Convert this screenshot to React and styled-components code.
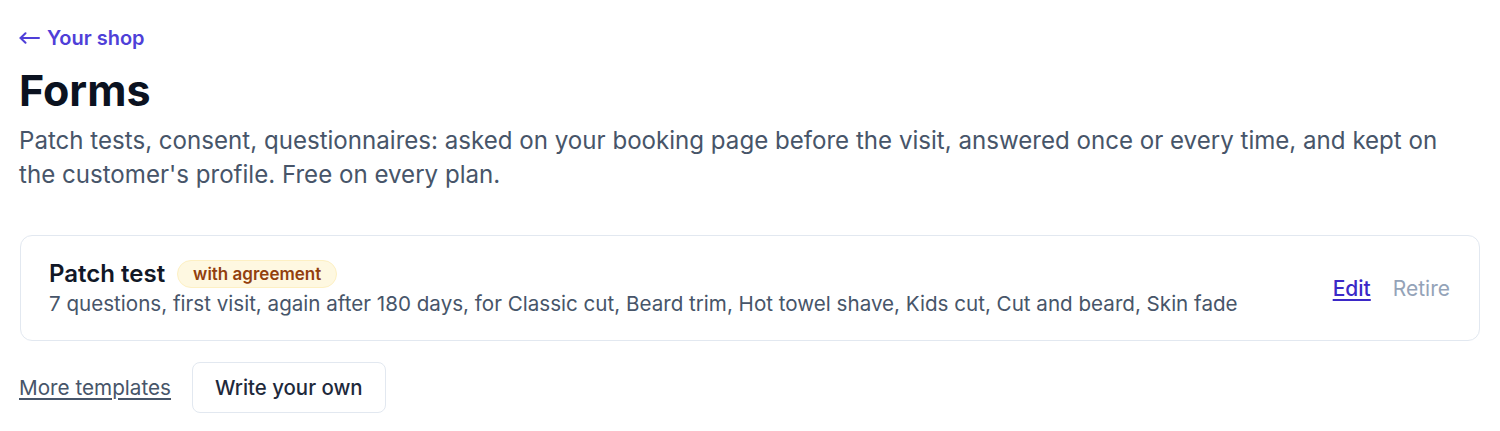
import React from "react";
import styled, { createGlobalStyle } from "styled-components";

const GlobalStyle = createGlobalStyle`
  body {
    margin: 0;
    background: #ffffff;
    font-family: Inter, "Noto Sans", sans-serif;
    color: #0f172a;
  }
`;

const Page = styled.main`
  padding: 24px 20px 18px 19px;
`;

const BackLink = styled.a`
  display: inline-flex;
  align-items: center;
  gap: 7px;
  font-size: 20px;
  font-weight: 600;
  line-height: 28px;
  color: #4f3fd8;
  text-decoration: none;
`;

const Arrow = styled.svg`
  width: 21px;
  height: 12px;
  flex: none;
`;

const Title = styled.h1`
  margin: 12px 0 0;
  font-size: 43px;
  font-weight: 700;
  line-height: 52px;
  color: #0b1220;
`;

const Intro = styled.p`
  margin: 8px 0 0;
  max-width: 1445px;
  font-size: 24.1px;
  line-height: 34px;
  color: #475569;
`;

const FormList = styled.div`
  margin-top: 43px;
  display: flex;
  flex-direction: column;
  gap: 12px;
`;

const Card = styled.div`
  display: flex;
  align-items: center;
  justify-content: space-between;
  margin-left: 1px;
  width: 1460px;
  box-sizing: border-box;
  padding: 23px 29px 22px 28px;
  border: 1px solid #e2e8f0;
  border-radius: 12px;
  background: #fff;
`;

const CardBody = styled.div`
  display: flex;
  flex-direction: column;
  gap: 1px;
`;

const CardHead = styled.div`
  display: flex;
  align-items: center;
  gap: 12px;
`;

const CardTitle = styled.span`
  font-size: 24px;
  font-weight: 600;
  line-height: 30px;
  color: #111827;
`;

const Badge = styled.span`
  display: inline-flex;
  align-items: center;
  padding: 1px 15px;
  font-size: 17px;
  font-weight: 600;
  line-height: 24px;
  color: #92400e;
  background: #fef8e1;
  border: 1px solid #fdf0c3;
  border-radius: 999px;
`;

const CardMeta = styled.span`
  font-size: 20.6px;
  line-height: 28px;
  color: #475569;
`;

const Actions = styled.div`
  display: flex;
  align-items: center;
  gap: 22px;
`;

const ActionLink = styled.a`
  font-size: 21px;
  line-height: 28px;
  font-weight: ${(p) => (p.$primary ? 500 : 400)};
  color: ${(p) => (p.$primary ? "#3b28c7" : "#94a3b8")};
  text-decoration: ${(p) => (p.$primary ? "underline" : "none")};
  text-underline-offset: 3px;
  cursor: pointer;
`;

const Footer = styled.div`
  display: flex;
  align-items: center;
  gap: 21px;
  margin-top: 21px;
`;

const TextLink = styled.a`
  font-size: 20.7px;
  line-height: 28px;
  color: #475569;
  text-decoration: underline;
  text-underline-offset: 3px;
  cursor: pointer;
`;

const Button = styled.button`
  font-family: inherit;
  font-size: 20.4px;
  font-weight: 500;
  line-height: 29px;
  color: #1e293b;
  background: #fff;
  border: 1px solid #e2e8f0;
  border-radius: 8px;
  padding: 10px 22px;
  cursor: pointer;
`;

const forms = [
  {
    name: "Patch test",
    badge: "with agreement",
    meta: "7 questions, first visit, again after 180 days, for Classic cut, Beard trim, Hot towel shave, Kids cut, Cut and beard, Skin fade",
  },
];

export default function App() {
  return (
    <>
      <GlobalStyle />
      <Page>
        <BackLink href="#">
          <Arrow viewBox="0 0 21 12" fill="none" stroke="currentColor" strokeWidth="2" strokeLinecap="round">
            <path d="M20 6H1.5M6.5 1.2L1.5 6l5 4.8" />
          </Arrow>
          Your shop
        </BackLink>
        <Title>Forms</Title>
        <Intro>
          Patch tests, consent, questionnaires: asked on your booking page before the visit, answered
          once or every time, and kept on the customer's profile. Free on every plan.
        </Intro>
        <FormList>
          {forms.map((f) => (
            <Card key={f.name}>
              <CardBody>
                <CardHead>
                  <CardTitle>{f.name}</CardTitle>
                  <Badge>{f.badge}</Badge>
                </CardHead>
                <CardMeta>{f.meta}</CardMeta>
              </CardBody>
              <Actions>
                <ActionLink $primary>Edit</ActionLink>
                <ActionLink>Retire</ActionLink>
              </Actions>
            </Card>
          ))}
        </FormList>
        <Footer>
          <TextLink>More templates</TextLink>
          <Button>Write your own</Button>
        </Footer>
      </Page>
    </>
  );
}
